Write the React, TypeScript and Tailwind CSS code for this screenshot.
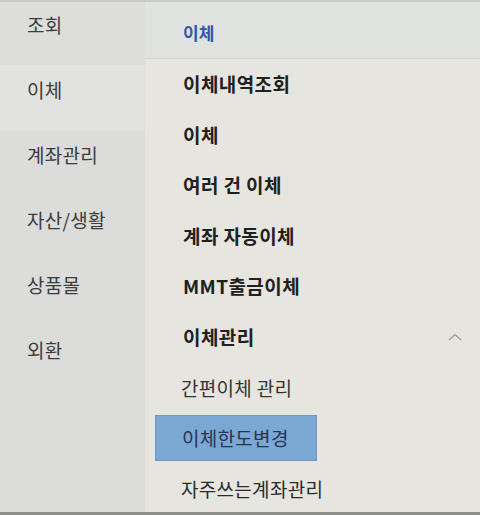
import React from "react";

const leftItems = ["조회", "이체", "계좌관리", "자산/생활", "상품몰", "외환"];

const boldItems = ["이체내역조회", "이체", "여러 건 이체", "계좌 자동이체", "MMT출금이체"];

export default function App() {
  return (
    <div
      className="w-[480px] h-[515px] flex overflow-hidden bg-[#e6e5e0] border-t-2 border-t-[#c9cac8] border-b-[3px] border-b-[#8e8f8d]"
      style={{ fontFamily: '"Noto Sans CJK KR", "Noto Sans", sans-serif' }}
    >
      <div className="w-[145px] shrink-0 flex flex-col bg-[#dcdddb] -mt-[2px]">
        {leftItems.map((t, i) => (
          <div
            key={i}
            className={`h-[65px] shrink-0 pl-[27px] pt-[12px] text-[19px] tracking-[0.3px] leading-[26px] text-[#3a3b3b] ${
              i === 1 ? "bg-[#e2e2e0]" : i === 0 ? "bg-[#dddedc]" : ""
            }`}
          >
            {t}
          </div>
        ))}
      </div>
      <div className="flex-1 flex flex-col -mt-[2px]">
        <div className="h-[59px] shrink-0 bg-[#e0e2df] border-b border-[#d6d6d2] pl-[38px] pt-[20px] text-[17px] font-bold tracking-[0px] leading-[26px] text-[#2c57ab]">
          이체
        </div>
        {boldItems.map((t, i) => (
          <div
            key={i}
            className="h-[50.6px] shrink-0 flex items-center pl-[38px] text-[19px] font-bold tracking-[0.4px] text-[#1f2020]"
          >
            {t}
          </div>
        ))}
        <div className="h-[50.6px] shrink-0 flex items-center justify-between pl-[38px] pr-[18px] text-[19px] font-bold tracking-[0.4px] text-[#1f2020]">
          <span>이체관리</span>
          <svg width="14" height="8" viewBox="0 0 14 8" fill="none">
            <polyline points="1,7 7,1.5 13,7" stroke="#9a9b99" strokeWidth="1.2" />
          </svg>
        </div>
        <div className="h-[50.6px] shrink-0 flex items-center pl-[36px] text-[19px] tracking-[0.3px] text-[#333434]">
          간편이체 관리
        </div>
        <div className="h-[50.6px] shrink-0 flex items-center pl-[10px]">
          <div className="w-[162px] h-[46px] bg-[#7aa7d4] border border-[#6b97c4] flex items-center pl-[26px] text-[19px] tracking-[0.3px] text-[#27364a]">
            이체한도변경
          </div>
        </div>
        <div className="h-[50.6px] shrink-0 flex items-center pl-[36px] text-[19px] tracking-[0.3px] text-[#2a2b2b]">
          자주쓰는계좌관리
        </div>
      </div>
    </div>
  );
}
